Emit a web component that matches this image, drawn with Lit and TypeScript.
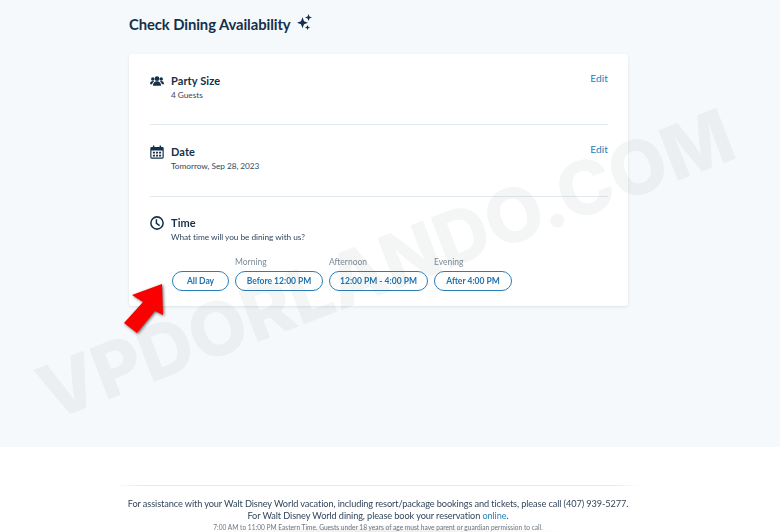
import { LitElement, html, css, svg } from "lit";
import { customElement } from "lit/decorators.js";

const sparkle = (cx: number, cy: number, r: number) => {
  const k = r * 0.28;
  return svg`<path d="M${cx} ${cy - r}L${cx + k} ${cy - k}L${cx + r} ${cy}L${cx + k} ${cy + k}L${cx} ${cy + r}L${cx - k} ${cy + k}L${cx - r} ${cy}L${cx - k} ${cy - k}Z"/>`;
};

@customElement("app-root")
export class AppRoot extends LitElement {
  static styles = css`
    :host { display: block; width: 780px; height: 532px; overflow: hidden; position: relative; background: #fff;
      font-family: Lato, "Open Sans", sans-serif; color: #253b56; }
    * { box-sizing: border-box; }
    .soft { filter: blur(0.35px); }
    .main { height: 447px; background: #f6f9fb; padding: 14px 129px 0; }
    .title { display: flex; align-items: center; gap: 6px; height: 20px; margin: 0 0 20px; font-size: 14.8px; font-weight: 700; color: #14304a; letter-spacing: -0.08px; }
    .title svg { width: 15px; height: 17px; fill: #14304a; margin-top: -4px; }
    .card { width: 499px; height: 252px; background: #fff; border-radius: 3px; padding: 0 20px 0 21px;
      box-shadow: 0 1px 3px rgba(40, 70, 100, 0.12); }
    .sec { display: flex; border-bottom: 1px solid #e3ebf0; height: 72px; padding-top: 19px; }
    .sec.first { height: 71px; }
    .sec.last { border: 0; height: auto; padding-top: 18px; }
    .ic { width: 21px; flex: none; }
    .ic svg { width: 14px; height: 14px; display: block; fill: #14304a; margin-top: 1px; }
    .body { flex: 1; }
    .h { font-size: 11px; font-weight: 700; color: #14304a; line-height: 15px; letter-spacing: 0.1px; }
    .sub { font-size: 8.3px; line-height: 11px; margin-top: 2px; color: #33485f; letter-spacing: -0.05px; }
    .edit { font-size: 10.2px; color: #2a80b9; line-height: 12px; margin-top: -1px; letter-spacing: 0.1px; }
    .groups { display: flex; gap: 6px; margin: 14px 0 0 1px; }
    .group { display: flex; flex-direction: column; }
    .lab { font-size: 8.5px; line-height: 11px; height: 11px; color: #7c8b98; margin-bottom: 3px; }
    .pill { height: 20px; border: 1.5px solid #2a7cb6; border-radius: 10px; background: transparent; color: #2273ad;
      font: 700 8.5px/17px Lato, sans-serif; padding: 0; text-align: center; }
    .p1 { width: 57px; } .p2 { width: 88px; } .p3 { width: 99px; } .p4 { width: 78px; }
    .foot { padding: 38px 140px 0 116px; text-align: center; }
    .rule { height: 1px; background: linear-gradient(90deg, transparent, #e6e9eb 5%, #e6e9eb 95%, transparent); margin-bottom: 12px; }
    .f1 { font-size: 9.2px; line-height: 12px; color: #33465c; white-space: nowrap; letter-spacing: -0.1px; }
    .f1 a { color: #2a80b9; }
    .f2 { font-size: 6.6px; line-height: 9px; color: #6d7884; white-space: nowrap; margin-top: 1px; }
    .shade { position: absolute; left: 190px; bottom: -14px; width: 390px; height: 22px; background: radial-gradient(closest-side, rgba(0,0,0,0.10), transparent); pointer-events: none; }
    .wm { position: absolute; left: 17px; top: 224px; font: 800 74.5px/80px Inter, sans-serif; color: #5a646e; opacity: 0.065; white-space: nowrap;
      transform: rotate(-21deg); pointer-events: none; }
    .arrow { position: absolute; left: 118px; top: 278px; width: 52px; height: 58px; pointer-events: none; filter: drop-shadow(1px 1.5px 1.5px rgba(0,0,0,0.6)); }
  `;

  render() {
    return html`
      <div class="soft">
        <div class="main">
          <div class="title">Check Dining Availability
            <svg viewBox="0 0 15 17">${sparkle(5.5, 8.8, 5.5)}${sparkle(11.5, 3.5, 3.4)}${sparkle(10.5, 13.6, 2.6)}</svg>
          </div>
          <div class="card">
            <div class="sec first">
              <div class="ic"><svg viewBox="0 0 24 24"><circle cx="12" cy="8" r="4"/><circle cx="4.8" cy="8.500" r="3"/><circle cx="19.2" cy="8.500" r="3"/><path d="M5 20c0-4.500 3-7.500 7-7.500s7 3 7 7.500z"/><path d="M0 17.500c0-3.500 2-5.500 4.800-5.500 1 0 1.700.2 2.300.6-2 1.300-3.200 3.400-3.400 4.900zM24 17.500c0-3.500-2-5.500-4.800-5.500-1 0-1.700.2-2.300.6 2 1.300 3.200 3.400 3.400 4.900z"/></svg></div>
              <div class="body"><div class="h">Party Size</div><div class="sub">4 Guests</div></div>
              <div class="edit">Edit</div>
            </div>
            <div class="sec">
              <div class="ic"><svg viewBox="0 0 24 24"><path fill-rule="evenodd" d="M5 1h2.500v2.500h9V1H19v2.500h2A2.500 2.500 0 0 1 23.500 6v15a2.500 2.500 0 0 1-2.500 2.500H3A2.500 2.500 0 0 1 .5 21V6A2.500 2.500 0 0 1 3 3.500h2zM2.500 9.500v11.500c0 .3.200.5.500.5h18c.3 0 .5-.2.5-.5V9.500zM5 11.500h3.500v3H5zm5.300 0h3.500v3h-3.500zm5.200 0H19v3h-3.500zM5 16.500h3.500v3H5zm5.300 0h3.500v3h-3.500zm5.200 0H19v3h-3.500z"/></svg></div>
              <div class="body"><div class="h">Date</div><div class="sub">Tomorrow, Sep 28, 2023</div></div>
              <div class="edit">Edit</div>
            </div>
            <div class="sec last">
              <div class="ic"><svg viewBox="0 0 24 24"><circle cx="12" cy="12" r="10.500" stroke="#14304a" stroke-width="2.600" fill="none"/><path d="M11 5.500V12.500L16.500 16.500" stroke="#14304a" stroke-width="2.600" fill="none"/></svg></div>
              <div class="body">
                <div class="h">Time</div>
                <div class="sub">What time will you be dining with us?</div>
                <div class="groups">
                  <div class="group"><div class="lab"></div><button class="pill p1">All Day</button></div>
                  <div class="group"><div class="lab">Morning</div><button class="pill p2">Before 12:00 PM</button></div>
                  <div class="group"><div class="lab">Afternoon</div><button class="pill p3">12:00 PM - 4:00 PM</button></div>
                  <div class="group"><div class="lab">Evening</div><button class="pill p4">After 4:00 PM</button></div>
                </div>
              </div>
            </div>
          </div>
        </div>
        <div class="foot">
          <div class="rule"></div>
          <div class="f1">For assistance with your Walt Disney World vacation, including resort/package bookings and tickets, please call (407) 939-5277.</div>
          <div class="f1">For Walt Disney World dining, please book your reservation <a>online</a>.</div>
          <div class="f2">7:00 AM to 11:00 PM Eastern Time. Guests under 18 years of age must have parent or guardian permission to call.</div>
        </div>
      </div>
      <div class="wm">VPDORLANDO.COM</div>
      <div class="shade"></div>
      <svg class="arrow" viewBox="0 0 52 58"><path d="M44 6L45 37L37 33L19 55L6 45L25 24L14 17Z" fill="#fb0000"/></svg>
    `;
  }
}
